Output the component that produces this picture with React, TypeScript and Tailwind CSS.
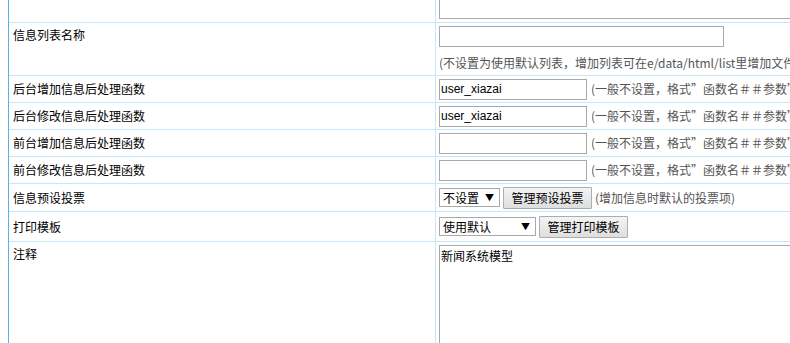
import React from "react";

const font = { fontFamily: '"Microsoft YaHei", "Noto Sans CJK SC", sans-serif' };

interface Row {
  label: string;
  height: string;
  top?: boolean;
  content: React.ReactNode;
}

const hint = "(一般不设置，格式\u201d函数名＃＃参数\u201d参数用逗号隔开)";

function TextInput({ value, width }: { value?: string; width: string }) {
  return (
    <div
      className={`${width} h-[21px] border border-[#a9a9a9] bg-white px-[1px] text-[12px] leading-[19px] text-black`}
      style={{ fontFamily: '"Liberation Sans", Arial, sans-serif' }}
    >
      {value}
    </div>
  );
}

function SelectBox({ value, width }: { value: string; width: string }) {
  return (
    <div className={`${width} h-[19px] border border-[#a9a9a9] bg-white flex items-center justify-between pl-[3px] pr-[5px] text-[12px]`}>
      <span className="leading-none">{value}</span>
      <span className="text-[9px] leading-none">▼</span>
    </div>
  );
}

function Btn({ children }: { children: React.ReactNode }) {
  return (
    <div className="h-[22px] w-[89px] border border-[#adadad] bg-gradient-to-b from-[#f4f4f4] to-[#dedede] flex items-center justify-center text-[12px] text-black rounded-[1px]">
      {children}
    </div>
  );
}

function HintRow({ value }: { value?: string }) {
  return (
    <div className="flex items-center gap-[4px] h-full">
      <TextInput value={value} width="w-[148px]" />
      <span className="whitespace-nowrap text-[12px] text-[#555]">{hint}</span>
    </div>
  );
}

const rows: Row[] = [
  {
    label: "",
    height: "h-[23px]",
    content: (
      <div className="h-full flex items-end pb-[3px]">
        <div className="w-[400px] h-[19px] border-x border-b border-[#a9a9a9]" />
      </div>
    ),
  },
  {
    label: "信息列表名称",
    height: "h-[53px]",
    top: true,
    content: (
      <div className="pt-[3px]">
        <TextInput width="w-[285px]" />
        <div className="mt-[9px] whitespace-nowrap text-[12px] leading-[14px] text-[#555]">
          (不设置为使用默认列表，增加列表可在e/data/html/list里增加文件)
        </div>
      </div>
    ),
  },
  { label: "后台增加信息后处理函数", height: "h-[27px]", content: <HintRow value="user_xiazai" /> },
  { label: "后台修改信息后处理函数", height: "h-[27px]", content: <HintRow value="user_xiazai" /> },
  { label: "前台增加信息后处理函数", height: "h-[27px]", content: <HintRow /> },
  { label: "前台修改信息后处理函数", height: "h-[27px]", content: <HintRow /> },
  {
    label: "信息预设投票",
    height: "h-[28px]",
    content: (
      <div className="flex items-center h-full">
        <SelectBox value="不设置" width="w-[61px]" />
        <div className="ml-[3px]">
          <Btn>管理预设投票</Btn>
        </div>
        <span className="ml-[3px] whitespace-nowrap text-[12px] text-[#555]">(增加信息时默认的投票项)</span>
      </div>
    ),
  },
  {
    label: "打印模板",
    height: "h-[30px]",
    content: (
      <div className="flex items-center h-full">
        <SelectBox value="使用默认" width="w-[97px]" />
        <div className="ml-[3px]">
          <Btn>管理打印模板</Btn>
        </div>
      </div>
    ),
  },
  {
    label: "注释",
    height: "h-[120px]",
    top: true,
    content: (
      <div className="pt-[3px]">
        <div className="w-[420px] h-[120px] border border-[#a9a9a9] px-[1px] pt-[2px] text-[12px] leading-[16px] text-black">
          新闻系统模型
        </div>
      </div>
    ),
  },
];

export default function App() {
  return (
    <div className="w-[790px] h-[343px] overflow-hidden bg-white" style={font}>
      <div className="ml-2 w-[900px] border-l border-[#53b2e6] h-[343px]">
        {rows.map((row, i) => (
          <div
            key={i}
            className={`flex ${row.height} ${i < rows.length - 1 ? "border-b border-[#c7e6f7]" : ""}`}
          >
            <div
              className={`w-[427px] shrink-0 border-r border-[#c7e6f7] pl-1 text-[12px] leading-[16px] text-black flex ${
                row.top ? "items-start pt-[4px]" : "items-center"
              }`}
            >
              {row.label}
            </div>
            <div className="flex-1 pl-[3px]">{row.content}</div>
          </div>
        ))}
      </div>
    </div>
  );
}
